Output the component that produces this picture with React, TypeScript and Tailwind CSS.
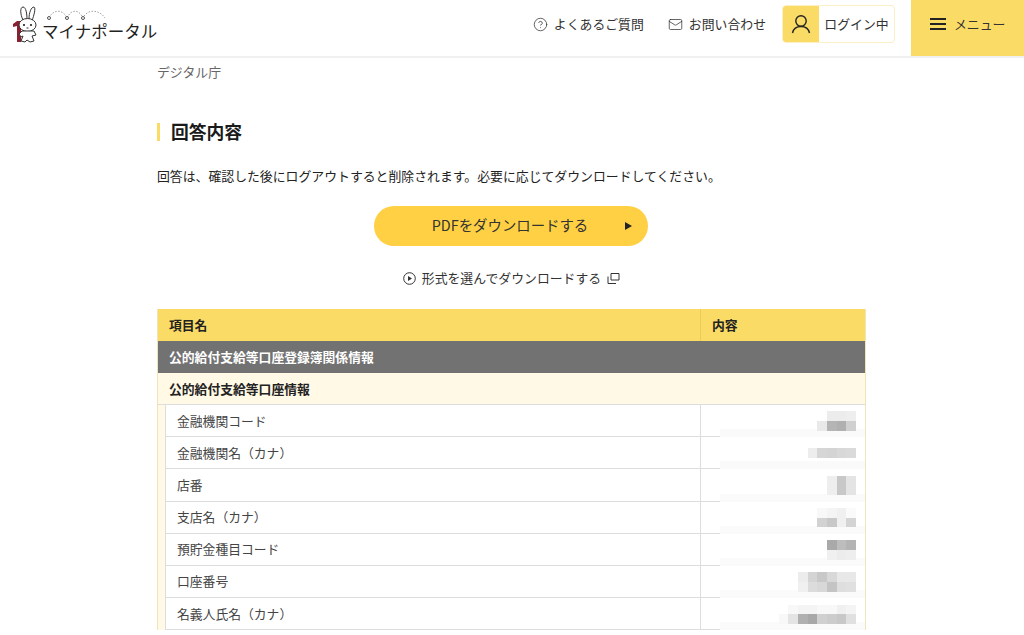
import { CircleHelp, Mail } from "lucide-react";

const FONT = "font-['Noto_Sans_CJK_JP','Noto_Sans',sans-serif]";

type Row = { label: string; patch: string[][] };

// mosaic colours, each inner array is one row of blocks, right aligned
const rows: Row[] = [
  {
    label: "金融機関コード",
    patch: [
      ["#ececec", "#ececec", "#eeeeee"],
      ["#e9e9e9", "#b5b5b5", "#b0b0b0", "#d0d0d0"],
    ],
  },
  {
    label: "金融機関名（カナ）",
    patch: [["#ededed", "#d6d6d6", "#d4d4d4", "#d8d8d8", "#dadada"]],
  },
  {
    label: "店番",
    patch: [
      ["#eeeeee", "#c8c8c8", "#e4e4e4"],
      ["#eeeeee", "#c8c8c8", "#e4e4e4"],
    ],
  },
  {
    label: "支店名（カナ）",
    patch: [
      ["#f8f8f8", "#f4f4f4", "#f0f0f0", "#fafafa"],
      ["#d2d2d2", "#c8c8c8", "#f0f0f0", "#d4d4d4"],
    ],
  },
  {
    label: "預貯金種目コード",
    patch: [
      ["#a9a9a9", "#bdbdbd", "#b4b4b4"],
      ["#f0f0f0", "#ececec", "#eeeeee"],
    ],
  },
  {
    label: "口座番号",
    patch: [
      ["#ececec", "#d4d4d4", "#c8c8c8", "#d8d8d8", "#e8e8e8", "#e8e8e8"],
      ["#f0f0f0", "#dcdcdc", "#d8d8d8", "#c4c4c4", "#dedede", "#e0e0e0"],
    ],
  },
  {
    label: "名義人氏名（カナ）",
    patch: [
      ["#ffffff", "#f8f8f8", "#f4f4f4", "#f4f4f4", "#f8f8f8", "#f8f8f8", "#f0f0f0", "#f4f4f4"],
      ["#f8f8f8", "#e4e4e4", "#b0b0b0", "#a8a8a8", "#d0d0d0", "#cccccc", "#c8c8c8", "#e0e0e0"],
    ],
  },
];

function Logo() {
  return (
    <svg width="30" height="38" viewBox="0 0 30 38" fill="none" className="shrink-0">
      {/* red numeral */}
      <path d="M1 18 L5 15 L9 15 L9 36 L5 36 L5 20 L1 21 Z" fill="#8c2030" />
      <g stroke="#333" strokeWidth="1" fill="#fff">
        <path d="M11 14 C8 8 8 1 11 1 C14 1 15 8 15 13" />
        <path d="M17 13 C17 7 19 1 22 1 C24 2 22 9 20 15" />
        <ellipse cx="15.5" cy="19" rx="8.5" ry="6.5" />
        <path d="M10 25 L7 28 L9 31 L11 30 L9 35 L13 36 L15 34 L18 36 L22 35 L20 30 L24 29 L22 25 Z" />
      </g>
      <circle cx="12" cy="19" r="1.1" fill="#222" />
      <circle cx="19" cy="19" r="1.1" fill="#222" />
      <path d="M14.5 22 L16.5 22" stroke="#333" />
    </svg>
  );
}

function Patch({ rows }: { rows: string[][] }) {
  return (
    <div className="flex flex-col items-end">
      {rows.map((r, i) => (
        <div key={i} className="flex">
          {r.map((c, j) => (
            <div key={j} className="w-[9.7px] h-[9.7px]" style={{ backgroundColor: c }} />
          ))}
        </div>
      ))}
    </div>
  );
}

export default function App() {
  return (
    <div className={`w-[1024px] h-[635px] overflow-hidden bg-white text-[#1a1a1a] ${FONT}`}>
      <header className="h-[58px] flex items-center border-b-2 border-[#f0f0f0]">
        <div className="flex items-end pl-[12px] mb-[6px]">
          <Logo />
          <div className="relative text-[16.5px] leading-none text-[#222] mb-[5px]">
            <svg width="62" height="12" viewBox="0 0 62 12" fill="none" className="absolute left-[5px] top-[-14px]">
              <path d="M2 9 C6 0 16 0 20 9 C24 0 32 0 36 9 C40 0 52 0 58 9" stroke="#888" strokeDasharray="1.5 1.5" strokeWidth="0.8" />
              <circle cx="2" cy="9" r="1.5" stroke="#555" fill="#fff" />
              <circle cx="20" cy="9" r="1.5" stroke="#555" fill="#fff" />
              <circle cx="36" cy="9" r="1.5" stroke="#555" fill="#fff" />
            </svg>
            マイナポータル
          </div>
        </div>
        <div className="ml-auto flex items-start h-full">
          <a className="flex items-center h-[38px] mt-[5px] gap-[6px] text-[12.86px] text-[#333] mr-[24px]">
            <CircleHelp size={15} strokeWidth={1.2} />
            よくあるご質問
          </a>
          <a className="flex items-center h-[38px] mt-[5px] gap-[6px] text-[12.86px] text-[#333] mr-[16px]">
            <Mail size={15} strokeWidth={1.2} />
            お問い合わせ
          </a>
          <div className="flex w-[113px] h-[38px] mt-[5px] rounded-[4px] border border-[#faf0c4] overflow-hidden mr-[16px]">
            <div className="w-[36px] bg-[#fadb66] flex items-center justify-center">
              <svg width="20" height="20" viewBox="0 0 20 20" fill="none" stroke="#222" strokeWidth="1.4">
                <circle cx="10" cy="7" r="5.2" />
                <path d="M1.5 19 C2.5 14.5 6 12.5 10 12.5 C14 12.5 17.5 14.5 18.5 19" />
              </svg>
            </div>
            <div className="flex-1 flex items-center justify-center text-[12.86px] text-[#333]">ログイン中</div>
          </div>
          <div className="w-[113px] h-full bg-[#fadb66] flex items-center pl-[19px] pb-[8px] gap-[8px] text-[12.86px] text-[#333]">
            <div className="w-[16px] flex flex-col gap-[3px]">
              <div className="h-[2px] bg-[#222]" />
              <div className="h-[2px] bg-[#222]" />
              <div className="h-[2px] bg-[#222]" />
            </div>
            メニュー
          </div>
        </div>
      </header>

      <main className="w-[709px] ml-[157px]">
        <p className="text-[12.86px] text-[#666] leading-[20px] mt-[4px]">デジタル庁</p>
        <h2 className="mt-[41px] h-[18px] flex items-center border-l-[3px] border-[#fadb66] pl-[11px] pb-[2px] text-[17.8px] leading-[16px] font-bold text-[#1a1a1a]">
          回答内容
        </h2>
        <p className="mt-[25px] text-[12.86px] leading-[20px] text-[#222]">
          回答は、確認した後にログアウトすると削除されます。必要に応じてダウンロードしてください。
        </p>
        <div className="mt-[20px] flex justify-center">
          <div className="relative mr-[1px] w-[274px] h-[40px] rounded-full bg-[#ffd043] flex items-center justify-center text-[14.4px] text-[#333] pb-[2px]">
            <span className="mr-[2px]">PDFをダウンロードする</span>
            <div className="absolute right-[16px] top-[16px] w-0 h-0 border-y-[4px] border-y-transparent border-l-[7px] border-l-[#222]" />
          </div>
        </div>
        <div className="mt-[22px] h-[20px] flex items-center justify-center gap-[6px] text-[12.86px] text-[#333]">
          <svg width="13" height="13" viewBox="0 0 13 13" fill="none">
            <circle cx="6.5" cy="6.5" r="5.8" stroke="#333" />
            <path d="M5 4 L9 6.5 L5 9 Z" fill="#333" />
          </svg>
          形式を選んでダウンロードする
          <svg width="13" height="13" viewBox="0 0 13 13" fill="none">
            <path d="M4 1.5 H12 V8 H4 Z" stroke="#333" />
            <path d="M1 4.5 V11.5 H9" stroke="#333" />
          </svg>
        </div>

        <div className="mt-[21px] text-[12.8px] border-x border-[#eee5b8]">
          <div className="flex h-[32px] bg-[#fadb66] font-bold text-[#222] items-center">
            <div className="w-[543px] h-full flex items-center pl-[11px] border-r border-[#e8cc5c]">項目名</div>
            <div className="pl-[11px]">内容</div>
          </div>
          <div className="h-[32px] bg-[#727272] text-white font-bold flex items-center pl-[11px]">
            公的給付支給等口座登録簿関係情報
          </div>
          <div className="h-[32px] bg-[#fff9e6] font-bold text-[#222] flex items-center pl-[11px] border-b border-[#ddd]">
            公的給付支給等口座情報
          </div>
          <div className="pl-[7px] bg-[#fff9e6]">
            {rows.map((r) => (
              <div key={r.label} className="flex h-[32.2px] bg-white border-l border-[#ddd]">
                <div className="w-[535px] border-r border-b border-[#ddd] flex items-center pl-[11px] pb-[1px] text-[#444]">
                  {r.label}
                </div>
                <div className="w-[19px] border-b border-[#ddd]" />
                <div className="flex-1 flex items-center justify-end pr-[9px] bg-[linear-gradient(#fff_75%,#fafafa_75%)]">
                  <Patch rows={r.patch} />
                </div>
              </div>
            ))}
          </div>
        </div>
      </main>
    </div>
  );
}
